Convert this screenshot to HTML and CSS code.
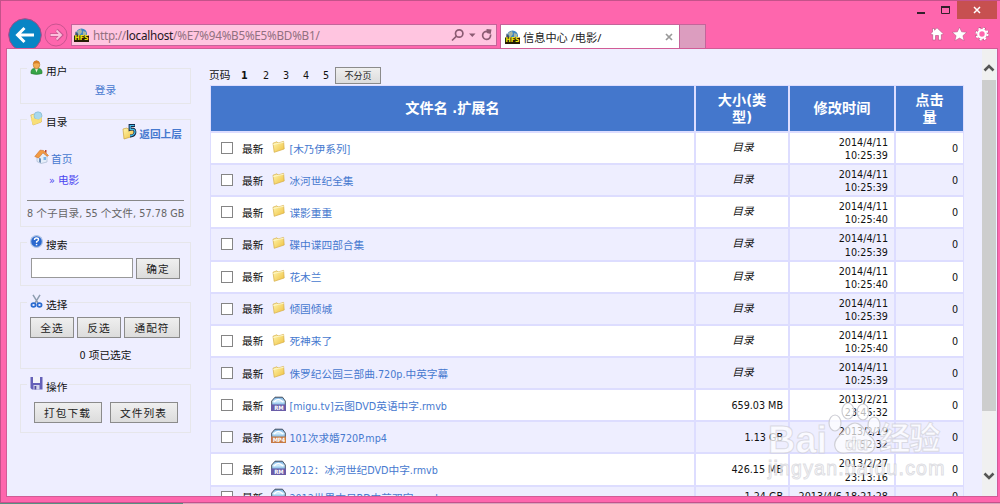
FILE: index.html
```
<!DOCTYPE html>
<html lang="zh-CN">
<head>
    <meta charset="UTF-8">
    <title>信息中心 /电影/</title>
    <link rel="stylesheet" href="styles.css">
</head>
<body>
<svg width="0" height="0" class="defs">
    <defs>
        <linearGradient id="gold" x1="0" y1="0" x2="1" y2="1"><stop offset="0" stop-color="#fff7b0"/><stop offset="1" stop-color="#efbf3c"/></linearGradient>
        <linearGradient id="sky" x1="0" y1="0" x2="0" y2="1"><stop offset="0" stop-color="#6da7dc"/><stop offset="0.5" stop-color="#d2efff"/><stop offset="1" stop-color="#5c9fd6"/></linearGradient>
    </defs>
    <symbol id="folder" viewBox="0 0 13 13">
        <path d="M1 3.2L5 1.8l1 1.2 5.6-1.6.6 7.6-10 3.3z" fill="url(#gold)" stroke="#d5ae48" stroke-width=".7"/>
        <path d="M1.3 4.5l10.5-2.3" stroke="#fffbd5" stroke-width=".8"/>
    </symbol>
    <symbol id="film" viewBox="0 0 15 16">
        <path d="M.7 10V5L4 1.200h7.500L14.300 5v5z" fill="url(#sky)" stroke="#38424f" stroke-width=".9"/>
        <path d="M3 6q4-5 9 0" fill="none" stroke="#fff" stroke-width="1.300"/>
        <path d="M0 8.500h15V15H0z" fill="currentColor"/>
    </symbol>
    <symbol id="hfs" viewBox="0 0 15 14">
        <circle cx="7.500" cy="6" r="5.500" fill="#3f86c4"/>
        <path d="M3 3l4-2 1 3-3 4zM9 3l3 1v4l-3-1z" fill="#a9b7a2"/>
        <path d="M1.500 3.500L4 6v3H1z" fill="#40536b"/>
        <path d="M0 7.500h15V14H0z" fill="#241d06"/>
    </symbol>
</svg>

<div class="window">
    <div class="titlebar">
        <svg class="win-min" width="8" height="2" viewBox="0 0 8 2"><path d="M0 1h8" stroke="#33202b" stroke-width="2"/></svg>
        <svg class="win-max" width="9" height="8" viewBox="0 0 9 8"><path d="M.5 1v6.500h8V1" fill="none" stroke="#33202b"/><path d="M0 1h9" stroke="#33202b" stroke-width="2"/></svg>
        <div class="win-close"><svg width="8" height="8" viewBox="0 0 8 8"><path d="M1 1l6 6M7 1L1 7" stroke="#fff" stroke-width="1.500"/></svg></div>
    </div>
    <div class="navbar">
        <svg class="back" width="34" height="34" viewBox="0 0 34 34"><circle cx="17" cy="17" r="16.300" fill="#0885c5" stroke="#a44c83" stroke-width="1"/><path d="M26 17H9.500M16.500 10l-7 7 7 7" fill="none" stroke="#fff" stroke-width="3"/></svg>
        <svg class="forward" width="24" height="24" viewBox="0 0 24 24"><circle cx="12" cy="12" r="11" fill="none" stroke="#c95490"/><path d="M6 12h11M12.500 7l5 5-5 5" fill="none" stroke="#c95490" stroke-width="3.400"/><path d="M6.500 12H17M12.500 7.500L17 12l-4.500 4.500" fill="none" stroke="#fbc0dc" stroke-width="1.800"/></svg>
        <div class="address">
            <span class="favicon"><svg width="15" height="14"><use href="#hfs"/></svg><b>HFS</b></span>
            <span class="url">http://<em>localhost</em>/%E7%94%B5%E5%BD%B1/</span>
            <svg class="address-tools" width="42" height="14" viewBox="0 0 42 14"><g fill="none" stroke="#8b5b72" stroke-width="1.700"><circle cx="8.200" cy="5.500" r="3.700"/><path d="M5.500 8.200L1 12.500"/><path d="M39.500 6.500a4 4 0 1 1-3-3"/></g><path d="M18 5.500h6.500l-3.200 3.500zM35.500 1l5 .5-.8 4.500-4-1z" fill="#8b5b72"/></svg>
        </div>
        <div class="tab">
            <span class="favicon"><svg width="15" height="14"><use href="#hfs"/></svg><b>HFS</b></span>
            <span class="tab-title">信息中心 /电影/</span>
            <svg width="8" height="8" viewBox="0 0 8 8"><path d="M1 1l6 6M7 1L1 7" stroke="#999" stroke-width="1.700"/></svg>
        </div>
        <div class="new-tab"></div>
        <div class="tools">
            <svg width="14" height="14" viewBox="0 0 14 14"><path d="M7 .8l6.300 6-1.300 1.300-.7-.6V13H8.500V8.500h-3V13H2.700V7.500l-.7.6L.7 6.800l1.800-1.700V1.500h2v1.700z" fill="#fff" stroke="#b0507f" stroke-width=".6"/></svg>
            <svg width="15" height="14" viewBox="0 0 15 14"><path d="M7.500.2l2.100 4.600 5.200.5-3.900 3.400 1.200 5-4.600-2.600-4.600 2.600 1.200-5L.2 5.300l5.200-.5z" fill="#fff" stroke="#b0507f" stroke-width=".5"/></svg>
            <svg width="14" height="14" viewBox="0 0 14 14"><circle cx="7" cy="7" r="5.500" fill="none" stroke="#b0507f" stroke-width="3" stroke-dasharray="2.700 1.620"/><circle cx="7" cy="7" r="5.600" fill="none" stroke="#fff" stroke-width="2" stroke-dasharray="2.200 2.200"/><circle cx="7" cy="7" r="3.800" fill="none" stroke="#fff" stroke-width="2.200"/></svg>
        </div>
    </div>

    <div class="client">
        <div class="sidebar">
            <fieldset class="box user">
                <legend><svg width="13" height="15" viewBox="0 0 13 15"><path d="M1 13.500q-.5-5 3.500-5h4q4 0 3.500 5-5.500 1.800-11 0z" fill="#36a447" stroke="#24782f" stroke-width=".6"/><path d="M5 8.500h3l-1.500 4z" fill="#e9f5dc"/><ellipse cx="6.500" cy="4.700" rx="3.300" ry="4" fill="#f3ad53" stroke="#b37026" stroke-width=".6"/><path d="M3.200 4Q4 .7 6.500.7T9.800 4q-3-1.500-6.600 0z" fill="#d67f25"/></svg>用户</legend>
                <a class="login" href="#">登录</a>
            </fieldset>
            <fieldset class="box dirs">
                <legend><svg width="13" height="15" viewBox="0 0 13 15"><path d="M.8 4l3.500-1 1 1 6-1v8L3 14z" fill="url(#gold)" stroke="#cda443" stroke-width=".6"/><circle cx="8" cy="4.800" r="4" fill="#a8d8ed" stroke="#7ab3d1" stroke-width=".6"/><path d="M.8 7l8 1.500L12 6l-1 5-8 3z" fill="#f8df78"/></svg>目录</legend>
                <a class="up" href="#"><svg width="15" height="16" viewBox="0 0 15 16"><path d="M1 5l4-1 1 1 6-1v8L2 15z" fill="url(#gold)" stroke="#caa23e" stroke-width=".7"/><path d="M13 1.500H8v4q5-1.500 5 2.500 0 4-5 4" fill="none" stroke="#14284b" stroke-width="2.800"/><path d="M12.500 1.500H8.200v4q5-1 4.800 2.500-.5 3.500-5 3.800" fill="none" stroke="#46bce7" stroke-width="1.200"/></svg>返回上层</a>
                <a class="home" href="#"><svg width="15" height="15" viewBox="0 0 15 15"><path d="M3 7l5-4 5 4v6l-6 1.500-4-2z" fill="#e5eefa" stroke="#a9b9d1" stroke-width=".7"/><path d="M.8 7.500L6 1.200l3.500.3 5 5-1.300.8L9 3.800 4.500 9z" fill="#f39b42" stroke="#cd6f28" stroke-width=".6"/><path d="M5 9l2 .5V14l-2-1z" fill="#6f8fb5"/><path d="M9.500 8h2.500v3H9.500z" fill="#78b4e8"/><path d="M11 1h1.500v3L11 3z" fill="#b94630"/></svg>首页</a>
                <a class="current" href="#">» 电影</a>
                <div class="stats">8 个子目录, 55 个文件, 57.78 GB</div>
            </fieldset>
            <fieldset class="box search">
                <legend><svg width="13" height="15" viewBox="0 0 13 15"><circle cx="6.500" cy="7.500" r="5.900" fill="#2a68cf" stroke="#b3c6e5" stroke-width="1.200"/><path d="M4.500 6q0-2 2-2t2 1.700q0 1-1.900 2v1" fill="none" stroke="#fff" stroke-width="1.400"/><path d="M5.800 9.900h1.500v1.400H5.800z" fill="#fff"/></svg>搜索</legend>
                <div class="line"><input type="text"><button>确定</button></div>
            </fieldset>
            <fieldset class="box select">
                <legend><svg width="13" height="15" viewBox="0 0 13 15"><path d="M3 .8l5.500 9M10 .8l-5.500 9" stroke="#8d9db0" stroke-width="1.500"/><ellipse cx="3.500" cy="11" rx="2.100" ry="1.900" fill="none" stroke="#2a6bd0" stroke-width="1.700"/><ellipse cx="9.500" cy="11" rx="2.100" ry="1.900" fill="none" stroke="#2a6bd0" stroke-width="1.700"/></svg>选择</legend>
                <div class="line"><button>全选</button><button>反选</button><button class="wide">通配符</button></div>
                <div class="selected">0 项已选定</div>
            </fieldset>
            <fieldset class="box actions">
                <legend><svg width="13" height="15" viewBox="0 0 13 15"><path d="M.5 1h12v12.500H2L.5 12z" fill="#6460b8"/><path d="M3 1h7v6H3z" fill="#f3f3fa"/><path d="M3.500 9h6v4.500h-6z" fill="#d4d7ec"/><path d="M4.500 10h1.800v3.500H4.500z" fill="#504b9f"/></svg>操作</legend>
                <div class="line"><button>打包下载</button><button>文件列表</button></div>
            </fieldset>
        </div>

        <div class="main">
            <div class="pages"><span class="label">页码</span><b>1</b><span>2</span><span>3</span><span>4</span><span>5</span><button>不分页</button></div>
            <div class="files">
                <div class="row head"><div>文件名 .扩展名</div><div>大小(类<br>型)</div><div>修改时间</div><div>点击<br>量</div></div>
                <div class="row">
                    <div class="name"><i class="check"></i><span>最新</span><svg class="folder"><use href="#folder"/></svg><a href="#">[木乃伊系列]</a></div>
                    <div class="type">目录</div><div class="date">2014/4/11<br>10:25:39</div><div class="hits">0</div>
                </div>
                <div class="row">
                    <div class="name"><i class="check"></i><span>最新</span><svg class="folder"><use href="#folder"/></svg><a href="#">冰河世纪全集</a></div>
                    <div class="type">目录</div><div class="date">2014/4/11<br>10:25:39</div><div class="hits">0</div>
                </div>
                <div class="row">
                    <div class="name"><i class="check"></i><span>最新</span><svg class="folder"><use href="#folder"/></svg><a href="#">谍影重重</a></div>
                    <div class="type">目录</div><div class="date">2014/4/11<br>10:25:40</div><div class="hits">0</div>
                </div>
                <div class="row">
                    <div class="name"><i class="check"></i><span>最新</span><svg class="folder"><use href="#folder"/></svg><a href="#">碟中谍四部合集</a></div>
                    <div class="type">目录</div><div class="date">2014/4/11<br>10:25:39</div><div class="hits">0</div>
                </div>
                <div class="row">
                    <div class="name"><i class="check"></i><span>最新</span><svg class="folder"><use href="#folder"/></svg><a href="#">花木兰</a></div>
                    <div class="type">目录</div><div class="date">2014/4/11<br>10:25:40</div><div class="hits">0</div>
                </div>
                <div class="row">
                    <div class="name"><i class="check"></i><span>最新</span><svg class="folder"><use href="#folder"/></svg><a href="#">倾国倾城</a></div>
                    <div class="type">目录</div><div class="date">2014/4/11<br>10:25:39</div><div class="hits">0</div>
                </div>
                <div class="row">
                    <div class="name"><i class="check"></i><span>最新</span><svg class="folder"><use href="#folder"/></svg><a href="#">死神来了</a></div>
                    <div class="type">目录</div><div class="date">2014/4/11<br>10:25:40</div><div class="hits">0</div>
                </div>
                <div class="row">
                    <div class="name"><i class="check"></i><span>最新</span><svg class="folder"><use href="#folder"/></svg><a href="#">侏罗纪公园三部曲.720p.中英字幕</a></div>
                    <div class="type">目录</div><div class="date">2014/4/11<br>10:25:39</div><div class="hits">0</div>
                </div>
                <div class="row">
                    <div class="name"><i class="check"></i><span>最新</span><span class="film rm"><svg><use href="#film"/></svg><b>RM</b></span><a href="#">[migu.tv]云图DVD英语中字.rmvb</a></div>
                    <div class="size">659.03 MB</div><div class="date">2013/2/21<br>23:45:32</div><div class="hits">0</div>
                </div>
                <div class="row">
                    <div class="name"><i class="check"></i><span>最新</span><span class="film mp4"><svg><use href="#film"/></svg><b>MP4</b></span><a href="#">101次求婚720P.mp4</a></div>
                    <div class="size">1.13 GB</div><div class="date">2013/2/19<br>17:52:32</div><div class="hits">0</div>
                </div>
                <div class="row">
                    <div class="name"><i class="check"></i><span>最新</span><span class="film rm"><svg><use href="#film"/></svg><b>RM</b></span><a href="#">2012：冰河世纪DVD中字.rmvb</a></div>
                    <div class="size">426.15 MB</div><div class="date">2013/2/27<br>23:13:16</div><div class="hits">0</div>
                </div>
                <div class="row last">
                    <div class="name"><i class="check"></i><span>最新</span><span class="film rm"><svg><use href="#film"/></svg><b>RM</b></span><a href="#">2012世界末日BD中英双字.rmvb</a></div>
                    <div class="size">1.24 GB</div><div class="date">2013/4/6 18:21:28</div><div class="hits">0</div>
                </div>
            </div>
        </div>

        <div class="scrollbar">
            <svg width="14" height="31" viewBox="0 0 14 31"><path d="M2.500 21.500L7 17l4.500 4.500" fill="none" stroke="#555" stroke-width="2.600"/></svg>
            <div class="thumb"></div>
            <svg class="down" width="14" height="30" viewBox="0 0 14 30"><path d="M2.500 7.500L7 12l4.500-4.500" fill="none" stroke="#555" stroke-width="2.600"/></svg>
        </div>
    </div>

    <!-- watermark over the lower right corner -->
    <div class="watermark">
        <div class="brand">
            <span class="bai">Bai</span>
            <svg width="54" height="54" viewBox="0 0 54 54"><g fill="#fff" fill-opacity=".7" stroke="#cfcfd6" stroke-width="1.200"><ellipse cx="7" cy="21" rx="6" ry="8"/><ellipse cx="20" cy="9" rx="6" ry="8"/><ellipse cx="35" cy="10" rx="6" ry="8"/><ellipse cx="46" cy="23" rx="6" ry="8"/><path d="M27 21c7 0 9 8 15 13 9 7 5 18-5 17-7-1-14-1-20 0-10 1-14-9-6-17 6-5 9-13 16-13z"/></g></svg>
            <span class="du">du</span>
            <span class="jingyan">经验</span>
        </div>
        <div class="domain">jingyan.baidu.com</div>
    </div>
</div>
<div class="desktop"></div>
</body>
</html>
```
FILE: styles.css
```
* {
    box-sizing: border-box;
}
body {
    margin: 0;
    height: 504px;
    overflow: hidden;
    font-family: "DejaVu Sans Condensed", "Noto Sans", "Noto Sans CJK SC", sans-serif;
    font-size: 10.7px;
    color: #111;
    background: #d9a5bd;
}
svg {
    display: block;
    flex: none;
}
.defs {
    position: absolute;
}
a {
    color: #4679cf;
    text-decoration: none;
}
.window {
    position: relative;
    height: 503px;
    display: flex;
    flex-direction: column;
    padding: 0 3px 6px 7px;
    background: #fe66ad;
    border: 1px solid #c4528a;
    border-width: 1px 0 1px 1px;
}

/* title bar and navigation */
.titlebar {
    height: 23px;
    display: flex;
    justify-content: flex-end;
}
.win-min {
    margin: 11px 16px 0 0;
}
.win-max {
    margin: 5px 7px 0 0;
}
.win-close {
    width: 40px;
    height: 18px;
    display: flex;
    align-items: center;
    justify-content: center;
    background: #c75050;
}
.navbar {
    height: 25px;
    display: flex;
    align-items: flex-start;
}
.back {
    margin: -6px 2px 0 0;
}
.forward {
    margin: -1px 3px 0 0;
}
.address {
    width: 426px;
    height: 22px;
    display: flex;
    align-items: center;
    padding: 0 3px 0 2px;
    background: #ffc5e0;
    border: 1px solid #c4649a;
}
.favicon {
    position: relative;
    width: 15px;
    height: 14px;
}
.favicon b {
    position: absolute;
    left: 0;
    top: 6px;
    width: 15px;
    text-align: center;
    font: bold 7px/8px "DejaVu Sans Condensed", sans-serif;
    color: #f8e411;
}
.url {
    flex: 1;
    margin-left: 4px;
    font: 11.7px "Noto Sans", sans-serif;
    letter-spacing: -0.25px;
    color: #91707f;
}
.url em {
    font-style: normal;
    color: #25171e;
}
.tab {
    width: 180px;
    height: 25px;
    margin-left: 3px;
    display: flex;
    align-items: center;
    padding: 0 6px 0 4px;
    background: #fff;
    border: 1px solid #c4649a;
    border-bottom: 0;
}
.tab-title {
    flex: 1;
    margin-left: 3px;
    font: 11.2px "Noto Sans", "Noto Sans CJK SC", sans-serif;
    color: #222;
}
.new-tab {
    width: 26px;
    height: 25px;
    background: #dc9dbf;
    border: 1px solid #c4649a;
    border-width: 1px 1px 0 0;
}
.tools {
    flex: 1;
    display: flex;
    justify-content: flex-end;
    gap: 8px;
    padding: 3px 8px 0 0;
}

/* page */
.client {
    position: relative;
    flex: 1;
    min-height: 0;
    display: flex;
    margin-left: -1px;
    overflow: hidden;
    background: #eeeeff;
    box-shadow: 0 0 0 1px #d15c96;
}
.sidebar {
    width: 203px;
    padding: 9px 19px 0 13px;
}
.box {
    margin: 0 0 5px;
    padding: 0 6px;
    border: 1px solid #e6e6ea;
    min-width: 0;
}
.box legend {
    height: 20px;
    padding: 0 2px;
    display: flex;
    align-items: flex-start;
    gap: 3px;
    line-height: 27px;
}
.box legend svg {
    margin: 2px 0 0 1px;
}
.box button, .pages button {
    height: 21px;
    padding: 0;
    font-family: "Noto Sans CJK SC", sans-serif;
    font-size: 10.7px;
    line-height: 18px;
    letter-spacing: 1px;
    color: #222;
    background: linear-gradient(#efefef, #dcdcdc);
    border: 1px solid #8b8b8b;
    border-radius: 0;
}
.user {
    height: 46px;
}
.login {
    display: block;
    text-align: center;
    line-height: 26px;
}
.dirs {
    height: 118px;
}
.up {
    display: flex;
    justify-content: flex-end;
    gap: 2px;
    margin: -6px 2px 0 0;
    font-weight: bold;
    line-height: 24px;
    height: 20px;
}
.up svg {
    margin-top: 1px;
}
.home {
    display: flex;
    gap: 2px;
    margin: 7px 0 0 7px;
    line-height: 20px;
    height: 19px;
}
.home svg {
    margin-top: -1px;
}
.current {
    display: block;
    margin: 1px 0 0 22px;
    height: 20px;
    line-height: 21px;
    color: #4b45f0;
}
.stats {
    margin-top: 10px;
    border-top: 1px solid #888;
    line-height: 25px;
    white-space: nowrap;
    letter-spacing: 0.05px;
    color: #666;
}
.search {
    height: 54px;
    margin-bottom: 6px;
}
.line {
    display: flex;
    gap: 3px;
}
.search .line {
    margin: 6px 0 0 4px;
}
.search input {
    width: 102px;
    height: 20px;
    padding: 0;
    border: 1px solid #999;
    background: #fff;
}
.search button, .select button {
    width: 44px;
}
.select {
    height: 77px;
}
.select .line {
    margin: 5px 0 0 3px;
}
.select .wide {
    width: 56px;
}
.selected {
    text-align: center;
    line-height: 36px;
}
.actions {
    height: 59px;
}
.actions .line {
    justify-content: center;
    gap: 8px;
    margin-top: 8px;
}
.actions button {
    width: 68px;
}

.main {
    width: 772px;
}
.pages {
    height: 36px;
    padding-top: 18px;
    display: flex;
    line-height: 18px;
}
.pages span, .pages b {
    width: 20px;
}
.pages .label {
    width: 32px;
    margin-left: -1px;
}
.pages b {
    width: 22px;
}
.pages button {
    width: 46px;
    height: 17px;
    margin-left: -8px;
    font-size: 9px;
    line-height: 14px;
    letter-spacing: 0;
}
.files {
    width: 754px;
    padding: 1px;
    display: grid;
    grid-template-rows: 45px repeat(11, 30.15px) 21px;
    gap: 2px;
    background: #ddddff;
}
.row {
    display: grid;
    grid-template-columns: 483px 92px 104px 67px;
    gap: 2px;
    min-height: 0;
}
.row > div {
    background: #fff;
}
.row:nth-child(odd) > div {
    background: #eeeeff;
}
.row.head > div {
    display: flex;
    align-items: center;
    justify-content: center;
    text-align: center;
    background: #4477cc;
    color: #fff;
    font-size: 14.2px;
    font-weight: bold;
    line-height: 17px;
}
.name {
    display: flex;
    align-items: center;
    padding-left: 10px;
}
.name span, .name a {
    padding-top: 3px;
    line-height: 16px;
}
.check {
    width: 12px;
    height: 12px;
    margin-right: 9px;
    background: #fff;
    border: 1px solid #858585;
}
.name .folder {
    width: 13px;
    height: 13px;
    margin: -3px 4px 0 9px;
}
.name .film {
    position: relative;
    width: 15px;
    height: 16px;
    padding: 0;
    margin: -3px 3px 0 8px;
}
.film svg {
    width: 15px;
    height: 16px;
}
.film b {
    position: absolute;
    left: 0;
    top: 8px;
    width: 15px;
    text-align: center;
    font-size: 6px;
    line-height: 7px;
    color: #fff;
}
.rm {
    color: #6a5da8;
}
.mp4 {
    color: #c67a45;
}
.mp4 b {
    letter-spacing: -0.3px;
}
.type {
    text-align: center;
    font-style: italic;
    padding-top: 2px;
    padding-left: 2px;
    line-height: 26px;
}
.size {
    padding: 4px 5px 0 0;
    text-align: right;
    line-height: 24px;
}
.date {
    padding: 3px 6px 0 0;
    text-align: right;
    line-height: 13.2px;
}
.hits {
    padding: 4px 5px 0 0;
    text-align: right;
    line-height: 24px;
}
.last .size, .last .hits {
    padding-top: 0;
    line-height: 20px;
}

.scrollbar {
    width: 14px;
    display: flex;
    flex-direction: column;
    background: #f0f0f0;
}
.thumb {
    height: 331px;
    background: #cdcdcd;
}
.down {
    margin-top: auto;
}

/* watermark */
.watermark {
    position: absolute;
    left: 767px;
    top: 401px;
    width: 190px;
    color: rgba(255, 255, 255, 0.75);
    -webkit-text-stroke: 1px rgba(200, 200, 208, 0.6);
}
.brand {
    position: relative;
    height: 54px;
    display: flex;
    align-items: flex-end;
    font: bold 38px/38px "Liberation Sans", "Noto Sans CJK SC", sans-serif;
}
.bai {
    margin-bottom: -3px;
}
.brand svg {
    margin-left: 1px;
}
.du {
    position: absolute;
    left: 77px;
    bottom: 2px;
    font-size: 19px;
    line-height: 20px;
}
.jingyan {
    font-size: 31px;
    letter-spacing: -1px;
    margin-left: -3px;
    line-height: 34px;
}
.domain {
    font: 19.5px/24px "Liberation Sans", sans-serif;
    letter-spacing: 1.2px;
    white-space: nowrap;
}
.desktop {
    width: 183px;
    height: 1px;
    background: #569080;
}
```
